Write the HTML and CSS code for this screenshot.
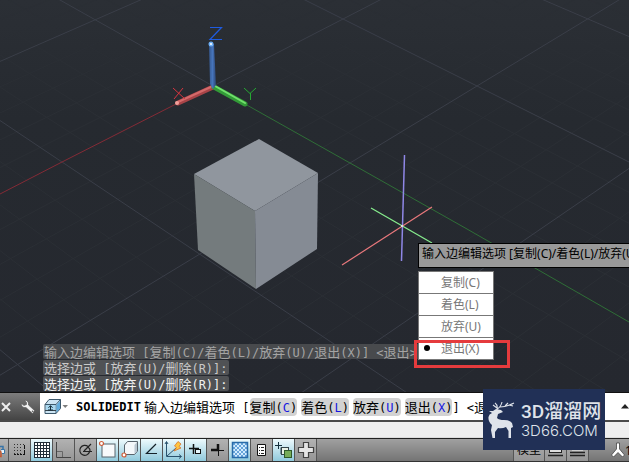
FILE: index.html
```html
<!DOCTYPE html>
<html lang="zh-CN">
<head>
<meta charset="utf-8">
<title>SOLIDEDIT</title>
<link rel="stylesheet" href="styles.css">
</head>
<body>
<div class="app">
  <main class="viewport">
    <svg class="scene" viewBox="0 0 629 393" preserveAspectRatio="xMinYMin slice" aria-hidden="true">
      <defs>
        <linearGradient id="sky" x1="0" y1="0" x2="0" y2="1"><stop offset="0" stop-color="#2b2f35"/><stop offset=".3" stop-color="#262a30"/><stop offset="1" stop-color="#25282f"/></linearGradient>
        <linearGradient id="rz" x1="0" x2="1" y1="0" y2="0"><stop offset="0" stop-color="#35588f"/><stop offset=".5" stop-color="#4674ba"/><stop offset="1" stop-color="#2c4676"/></linearGradient>
      </defs>
      <rect width="629" height="393" fill="url(#sky)"/>
      <g id="grid" fill="none"></g>
      <path d="M0 194L62 162L178 103" stroke="#842b36" fill="none"/>
      <path d="M245 104L350 163L467 229L629 322" stroke="#2f6e37" fill="none"/>
      <path d="M259 139L318 173L255 211L194 174Z" fill="#90969e"/>
      <path d="M194 174L255 211L256 289L198 250Z" fill="#747b7d"/>
      <path d="M255 211L318 173L317 249L256 289Z" fill="#858b94"/>
      <g fill="none" stroke-linecap="round">
        <path d="M213 87L178 103" stroke="#a84448" stroke-width="5"/>
        <path d="M213 86L178 102" stroke="#d46a6a" stroke-width="2"/>
        <path d="M214 87L245 104" stroke="#329a37" stroke-width="5"/>
        <path d="M215 86L245 103" stroke="#72df6c" stroke-width="2"/>
      </g>
      <path d="M209 44L214 44L216 85L213 89L210 84Z" fill="url(#rz)"/>
      <circle cx="211" cy="44" r="2.5" fill="#6fb0f4"/><circle cx="211" cy="44" r="1" fill="#fff"/>
      <circle cx="177" cy="103" r="2" fill="#f0a09a"/>
      <g fill="none" stroke-width="1">
        <path d="M210 27.500H221.500L210 39.500H222" stroke="#1f5be0" stroke-width="1.200"/>
        <path d="M173 88L185 99M183 88L174 99" stroke="#d8343f"/>
        <path d="M244 88L250 93.500L256 88M250.500 93V100" stroke="#25a832"/>
        <path d="M404.500 155L401.500 261" stroke="#8f87e6" stroke-width="1.500"/>
        <path d="M371 208L432 243" stroke="#86ec8d" stroke-width="1.300"/>
        <path d="M432 207L342 265" stroke="#e9787c" stroke-width="1.200"/>
      </g>
      <rect x="401" y="225" width="2" height="2" fill="#ddd"/>
    </svg>

    <section class="prompt">
      <div class="prompt-title">输入边编辑选项 [复制(C)/着色(L)/放弃(U)/退出(X)]</div>
      <div class="menu">
        <button type="button">复制(C)</button>
        <button type="button">着色(L)</button>
        <button type="button">放弃(U)</button>
        <button type="button" class="current">退出(X)</button>
      </div>
    </section>

    <div class="history">
      <p class="line old">输入边编辑选项<span class="m"> [</span>复制<span class="m">(C)/</span>着色<span class="m">(L)/</span>放弃<span class="m">(U)/</span>退出<span class="m">(X)] &lt;</span>退出<span class="m">&gt;: _</span></p>
      <p class="line mid">选择边或<span class="m"> [</span>放弃<span class="m">(U)/</span>删除<span class="m">(R)]:</span></p>
      <p class="line">选择边或<span class="m"> [</span>放弃<span class="m">(U)/</span>删除<span class="m">(R)]:</span></p>
    </div>
    <div class="highlight"></div>
  </main>

  <section class="command">
    <div class="handle">
      <button type="button" aria-label="关闭"><svg width="12" height="12" viewBox="0 0 12 12"><path d="M2 2L10 10M10 2L2 10" stroke="#eee" stroke-width="2"/></svg></button>
      <button type="button" aria-label="自定义"><svg width="16" height="16" viewBox="0 0 16 16"><path d="M4.500 1.500C7 1 9 3 8.500 6L14.500 11.500L12.500 14.500L6 8.500C3 9 1 7 1.500 4.500L4 6.500L6.500 5.500L6.500 3.500Z" fill="#f2f2f2" stroke="#555" stroke-width=".6"/><circle cx="12.500" cy="12.300" r=".8" fill="#555"/></svg></button>
    </div>
    <div class="entry">
      <button type="button" class="recent" aria-label="最近使用的命令">
        <svg width="24" height="18" viewBox="0 0 24 18"><path d="M1 6.500L5 1.500H16.500V10.500L12 15.500H1Z" fill="#cbe4f3" stroke="#3c586c"/><path d="M1 6.500H12V15.500M12 6.500L16.500 1.500" fill="none" stroke="#3c586c"/><path d="M2 7H11.500V12H2Z" fill="#a9d8f0"/><path d="M12.500 7L16 3V10.500L12.500 14.500Z" fill="#63acdc"/><path d="M1 12.500H12" stroke="#38444c"/><path d="M6.500 12V8M4.500 9.800L6.500 7.600L8.500 9.800M4 12H9" stroke="#142d3b" fill="none"/><path d="M18.500 7H24L21.200 10Z" fill="#7c7c7c"/></svg>
      </button>
      <b class="m name">SOLIDEDIT</b>
      <span class="text">输入边编辑选项<span class="m"> [</span></span>
      <span class="choices">
        <button type="button">复制<span class="m">(<i>C</i>)</span></button>
        <button type="button">着色<span class="m">(<i>L</i>)</span></button>
        <button type="button">放弃<span class="m">(<i>U</i>)</span></button>
        <button type="button">退出<span class="m">(<i>X</i>)</span></button>
      </span>
      <span class="text tail"><span class="m">] &lt;</span>退出<span class="m">&gt;:</span></span>
      <button type="button" class="expand" aria-label="展开"><svg width="8" height="5" viewBox="0 0 8 5"><path d="M0 4.500L4 0L8 4.500Z" fill="#222"/></svg></button>
    </div>
  </section>

  <div class="strip"></div>

  <footer class="status">
    <div class="tools">
      <button type="button" aria-label="推断约束" class="first"><svg viewBox="0 0 22 22"><path d="M13 7.500H17V12" fill="none" stroke="#3774a8" stroke-width="1.500"/><path d="M12 12.500H15V17.500H12" fill="none" stroke="#c5552c" stroke-width="1.500"/><path d="M15 10.500H18.500V14.500H16" fill="#e9f6ff" stroke="#3774a8"/></svg></button>
      <button type="button" aria-label="捕捉模式"><svg viewBox="0 0 22 22"><path d="M5 5.500H16M5 8.500H14M5 11.500H14M5 14.500H14" stroke="#333" stroke-dasharray="1 2"/><path d="M15.500 6V15" stroke="#111" stroke-dasharray="4 1"/><path d="M5 15.500H16" stroke="#111" stroke-dasharray="2 1"/></svg></button>
      <button type="button" aria-label="栅格显示" class="on"><svg viewBox="0 0 22 22"><path d="M3 3H18V18H3Z" fill="#fff"/><path d="M3 3.500H18.500M3 6.500H18M3 9.500H18M3 12.500H18M3 15.500H18M3 18.500H19M3.500 3V18M6.500 3V18M9.500 3V18M12.500 3V18M15.500 3V18M18.500 3V18" stroke="#222e38"/></svg></button>
      <button type="button" aria-label="正交模式"><svg viewBox="0 0 22 22"><path d="M3.500 3V18.500H18" fill="none" stroke="#444"/><path d="M4 12.500H9.500V18" fill="none" stroke="#666"/></svg></button>
      <button type="button" aria-label="极轴追踪"><svg viewBox="0 0 22 22"><path d="M13 7.500A5 5 0 1 0 14.500 13M8 12.500H17M9 12L16 5M13 8Q15.500 10 15 12.500" fill="none" stroke="#222" stroke-width="1.200"/></svg></button>
      <button type="button" aria-label="对象捕捉" class="on"><svg viewBox="0 0 22 22"><rect x="5" y="5" width="13" height="13" fill="#f7f9fb" stroke="#59646d"/><circle cx="4.500" cy="4.500" r="2" fill="#fff" stroke="#d05a35" stroke-width="1.200"/></svg></button>
      <button type="button" aria-label="三维对象捕捉" class="on"><svg viewBox="0 0 22 22"><path d="M5.500 6L8.500 2.500H18.500V12L15.500 15.500H5.500Z" fill="#f3f7fa" stroke="#59646d"/><path d="M15.500 6L18 3V12L15.500 15Z" fill="#b9c7d1"/><circle cx="5" cy="16" r="2" fill="#fff" stroke="#d05a35" stroke-width="1.200"/></svg></button>
      <button type="button" aria-label="对象捕捉追踪" class="on"><svg viewBox="0 0 22 22"><path d="M15 5L5.500 14.500H16" fill="none" stroke="#152129" stroke-width="1.200"/></svg></button>
      <button type="button" aria-label="动态 UCS" class="on"><svg viewBox="0 0 22 22"><path d="M3.500 3V17.500H18M4 17L13 9M2 5L3.500 2.500L5 5M16 15.500L18.500 17.500L16 19.500" fill="none" stroke="#29526d"/><path d="M15 2.500L18 5L16 7.500L18 9L11 12L13.500 8.500L11.500 7Z" fill="#ffc640" stroke="#d8732c" stroke-width=".8"/></svg></button>
      <button type="button" aria-label="动态输入" class="on"><svg viewBox="0 0 22 22"><path d="M4 9.500H14M8.500 5V15" stroke="#111" stroke-width="1.500"/><rect x="10.500" y="10.500" width="5" height="4" fill="#e6f7fd" stroke="#111"/></svg></button>
      <button type="button" aria-label="线宽"><svg viewBox="0 0 22 22"><path d="M4 11H11M11 5V11" stroke="#111" stroke-width="2.500"/><path d="M10 11.500H17M11.500 10V17" stroke="#111"/></svg></button>
      <button type="button" aria-label="透明度" class="on"><svg viewBox="0 0 22 22"><defs><pattern id="chk" width="4" height="4" patternUnits="userSpaceOnUse"><path d="M0 0H4V4H0Z" fill="#d2ecff"/><path d="M0 0H2V2H0ZM2 2H4V4H2Z" fill="#67a4d9"/></pattern></defs><rect x="3.500" y="3.500" width="15" height="15" fill="url(#chk)" stroke="#286ba9" stroke-width="1.500"/></svg></button>
      <button type="button" aria-label="快捷特性"><svg viewBox="0 0 22 22"><path d="M6.500 5.500H14.500V16.500H6.500Z" fill="#fff" stroke="#111"/><path d="M8 8.500H9M10 8.500H13M8 11.500H9M10 11.500H13M8 14.500H9M10 14.500H13" stroke="#222"/></svg></button>
      <button type="button" aria-label="选择循环" class="on"><svg viewBox="0 0 22 22"><path d="M2 6.500H9M5.500 3V10" stroke="#15303d"/><path d="M8 15V8.500H15" fill="none" stroke="#33444a"/><rect x="8.500" y="8.500" width="7" height="7" fill="#e9f2e7" stroke="#33444a"/><rect x="11.500" y="11.500" width="7" height="7" fill="#76ac58" stroke="#2f5a2a"/></svg></button>
      <button type="button" aria-label="注释监视器"><svg viewBox="0 0 22 22"><path d="M8.500 3.500H13.500V8.500H18.500V13.500H13.500V18.500H8.500V13.500H3.500V8.500H8.500Z" fill="#e4e4e4" stroke="#414141" stroke-width="1.200"/></svg></button>
    </div>
    <div class="layouts">
      <button type="button" class="model">模型</button>
      <button type="button" aria-label="快速查看布局"><svg viewBox="0 0 22 22"><rect x="4.500" y="4.500" width="12" height="9" fill="#ddd" stroke="#222"/><path d="M7 11V8H12V11M3 16.500H18" fill="none" stroke="#222" stroke-width="1.300"/></svg></button>
      <button type="button" aria-label="快速查看图形"><svg viewBox="0 0 22 22"><path d="M5 6H16V12H5Z" fill="#ccc"/><path d="M3 13.500H18M3 16.500H18" stroke="#222" stroke-width="1.300"/></svg></button>
    </div>
    <button type="button" class="scale"><svg width="14" height="16" viewBox="0 0 14 16"><path d="M5.500 1H8.500V7L13.500 13L11.500 15L7 10.500L2.500 15L.5 13L5.500 7Z" fill="#fff" stroke="#333" stroke-width=".7"/></svg>1:1</button>
  </footer>

  <aside class="brand">
    <svg class="deer" viewBox="0 0 28 38" aria-hidden="true">
      <path d="M6 10L9 8L14 9L16 11L11 13L10 17Q12 19 17 19Q23 19 25 22L26 26L24 27V37H21.500V30L19 26Q15 28 11 27L8 31V37H5.500L4 29L5 24Q1 21 1.500 16Q2 13 5 12L2 10Z" fill="#dfe3ea"/>
      <path d="M10 9Q11 4 8 2M10 8Q14 6 15 1M13 6Q19 6 27 2M18 5L21 2M22 4L26 5M10 7L6 4" fill="none" stroke="#dfe3ea" stroke-width="1.100"/>
    </svg>
    <div class="brand-text"><strong>3D溜溜网</strong><span>3D66.COM</span></div>
  </aside>
</div>
<script src="grid.js"></script>
</body>
</html>
```

FILE: styles.css
```css
* { box-sizing: border-box; }

body {
  margin: 0;
  background: #25282f;
  font-family: "Noto Sans", "Noto Sans CJK SC", sans-serif;
  font-size: 12px;
}

button {
  margin: 0;
  padding: 0;
  border: 0;
  background: none;
  color: inherit;
  font: inherit;
}

svg { display: block; }

.app {
  position: relative;
  display: flex;
  flex-direction: column;
  height: 100vh;
  overflow: hidden;
}

.viewport {
  position: relative;
  flex: 1;
  min-height: 0;
  display: flex;
  flex-direction: column;
  justify-content: flex-end;
  overflow: hidden;
}

.scene {
  position: absolute;
  inset: 0;
  width: 100%;
  height: 100%;
}

.prompt {
  position: absolute;
  left: 418px;
  top: 243px;
  z-index: 2;
}

.prompt-title {
  height: 25px;
  padding: 0 3px;
  border: 1px solid #000;
  background: #999;
  color: #000;
  line-height: 20px;
  white-space: nowrap;
}

.menu {
  display: flex;
  flex-direction: column;
  width: 76px;
  margin-top: 3px;
  border: 1px solid #777;
  border-top: 0;
  background: #fff;
}

.menu button {
  position: relative;
  height: 22px;
  padding-left: 22px;
  border-top: 1px solid #777;
  color: #777;
  line-height: 20px;
  text-align: left;
}

.menu .current::before {
  content: "";
  position: absolute;
  left: 5px;
  top: 7px;
  width: 6px;
  height: 6px;
  border-radius: 50%;
  background: #000;
}

.highlight {
  position: absolute;
  left: 414px;
  top: 340px;
  z-index: 3;
  width: 96px;
  height: 28px;
  border: 3px solid #e53b3d;
}

.history {
  position: relative;
  display: flex;
  flex-direction: column;
  align-items: flex-start;
  gap: 1px;
  padding: 0 0 1px 43px;
}

.line {
  height: 15px;
  margin: 0;
  padding: 0 1px;
  border-radius: 2px;
  background: #505255;
  color: #f2f2f2;
  font-family: "Noto Sans CJK SC", sans-serif;
  font-size: 13px;
  line-height: 15px;
  white-space: pre;
}

.line.mid { color: #c8c8c8; }

.line.old {
  padding-right: 28px;
  background: #484a4d;
  color: #a4a4a4;
}

.m {
  font-family: "DejaVu Sans Mono", monospace;
  font-size: 12px;
  line-height: 1;
}

.command {
  display: flex;
  height: 30px;
  border-top: 1px solid #111;
  border-bottom: 2px solid #4a4a4a;
  background: #fff;
}

.handle {
  display: flex;
  align-items: center;
  justify-content: space-between;
  width: 40px;
  padding-right: 4px;
  background: linear-gradient(#7d7d7d, #444);
}

.entry {
  flex: 1;
  min-width: 0;
  display: flex;
  align-items: center;
  padding-left: 4px;
  color: #000;
  font-family: "Noto Sans CJK SC", sans-serif;
  font-size: 13px;
  line-height: 18px;
  white-space: pre;
}

.name { margin: 0 3px 0 8px; }

.choices {
  display: flex;
  gap: 4px;
}

.choices button {
  height: 18px;
  border-radius: 4px;
  background: #d2d2d2;
  line-height: 18px;
}

.choices i {
  color: #1515e0;
  font-style: normal;
}

.tail {
  flex: 1;
  min-width: 0;
  overflow: hidden;
}

.expand { width: 8px; }

.strip {
  height: 16px;
  border-bottom: 1px solid #ddd;
  background: #efefef;
}

.status {
  display: flex;
  height: 24px;
  border-top: 1px solid #222;
  border-bottom: 1px solid #333;
  background: linear-gradient(#a0a0a0, #747474);
}

.tools { display: flex; }

.tools button,
.layouts button {
  width: 22px;
  height: 22px;
  border-right: 1px solid #555;
  background: linear-gradient(#b2b2b2, #959595);
}

.tools svg,
.layouts svg {
  width: 22px;
  height: 22px;
}

.tools .first {
  width: 9px;
  display: flex;
  justify-content: flex-end;
  overflow: hidden;
}

.tools .first svg { flex: none; }

.tools .on { background: linear-gradient(#eefafd, #8fc9dc); }

.layouts {
  display: flex;
  margin-left: auto;
  margin-right: 22px;
}

.layouts .model {
  width: 32px;
  border-left: 1px solid #555;
  color: #000;
  line-height: 22px;
}

.scale {
  display: flex;
  align-items: center;
  width: 18px;
  overflow: hidden;
  color: #000;
}

.scale svg { flex: none; }

.brand {
  position: absolute;
  right: 24px;
  bottom: 12px;
  z-index: 4;
  display: flex;
  align-items: center;
  gap: 6px;
  width: 122px;
  height: 61px;
  padding: 0 4px;
  background: #213056;
  color: #dfe3ea;
}

.deer {
  flex: none;
  width: 28px;
  height: 38px;
}

.brand-text {
  display: flex;
  flex-direction: column;
  font-family: Roboto, "Noto Sans CJK SC", sans-serif;
  white-space: nowrap;
}

.brand-text strong {
  font-size: 19px;
  font-weight: 500;
  line-height: 22px;
}

.brand-text span {
  font-family: Inter, sans-serif;
  font-size: 15px;
  font-weight: 300;
  line-height: 16px;
}
```

FILE: grid.js
```javascript
// Each entry is a major grid line, given by two points on it.
const alongY = [
  [-115, 253, 11, 359],
  [62, 162, 198, 253],
  [213, 86, 350, 163],
  [343, 19, 477, 86],
  [455, -38, 588, 19],
  [555, -87, 686, -38]
];
const alongX = [
  [0, -38, 120, -80],
  [97, 19, 225, -37],
  [213, 86, 343, 19],
  [350, 163, 477, 86],
  [507, 252, 637, 163],
  [690, 352, 820, 250]
];

const grid = document.getElementById("grid");

function drawLine(p, color, from = -8, to = 8) {
  const dx = p[2] - p[0];
  const dy = p[3] - p[1];
  const line = document.createElementNS("http://www.w3.org/2000/svg", "path");
  line.setAttribute("d", `M${p[0] + from * dx} ${p[1] + from * dy}L${p[0] + to * dx} ${p[1] + to * dy}`);
  line.setAttribute("stroke", color);
  grid.append(line);
}

for (const family of [alongY, alongX]) {
  for (let i = 0; i < family.length - 1; i++) {
    for (let k = 1; k < 5; k++) {
      drawLine(family[i].map((v, n) => v + (family[i + 1][n] - v) * k / 5), "#2b2f35");
    }
  }
}

// The lines through the origin stop there; the coloured axes carry on.
alongY.forEach((p, i) => drawLine(p, "#3a3e48", -8, i === 2 ? 0 : 8));
alongX.forEach((p, i) => drawLine(p, "#3a3e48", i === 2 ? 0 : -8, 8));
```
